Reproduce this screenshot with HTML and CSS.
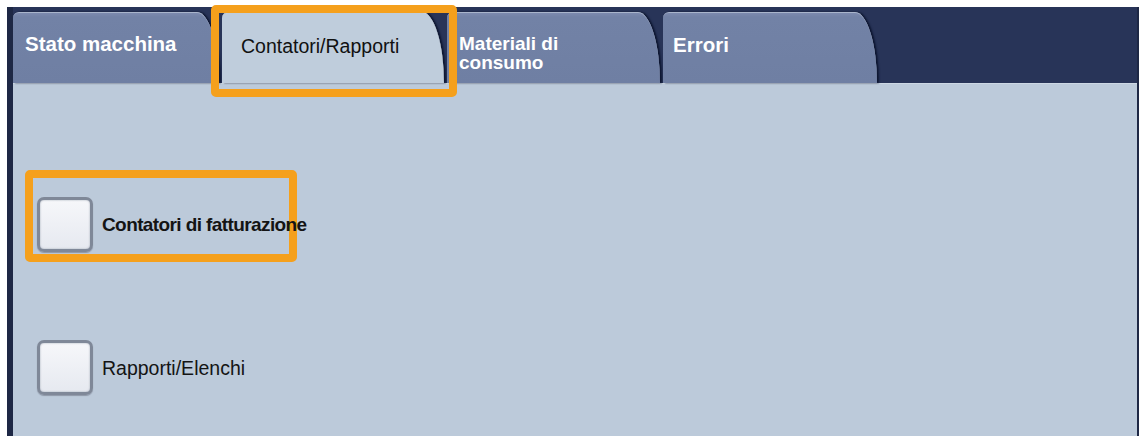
FILE: index.html
```html
<!DOCTYPE html>
<html lang="it">
<head>
<meta charset="utf-8">
<title>Contatori/Rapporti</title>
<link rel="stylesheet" href="styles.css">
</head>
<body>
<div class="frame">
  <div class="tabbar">
    <div class="tab">Stato macchina</div>
    <div class="tab active">Contatori/Rapporti</div>
    <div class="tab two-line">Materiali di<br>consumo</div>
    <div class="tab last">Errori</div>
  </div>
  <div class="panel">
    <div class="row highlighted">
      <div class="btn"></div>
      <span class="label bold">Contatori di fatturazione</span>
    </div>
    <div class="row">
      <div class="btn"></div>
      <span class="label">Rapporti/Elenchi</span>
    </div>
  </div>
</div>
</body>
</html>
```

FILE: styles.css
```css
*, *::before, *::after { box-sizing: border-box; }

html, body {
  margin: 0;
  padding: 0;
  background: #ffffff;
}

body {
  font-family: "Liberation Sans", Arial, sans-serif;
}

.frame {
  margin: 7px 4px 0 7px;
  height: 429px;
  background: #283458;
  border-left: 6px solid #1e2845;
  border-right: 2px solid #1e2845;
  display: flex;
  flex-direction: column;
}

.tabbar {
  height: 76px;
  padding-top: 5px;
  display: flex;
  align-items: stretch;
}

.tab {
  position: relative;
  height: 71px;
  margin-right: 3px;
  padding: 22px 0 0 12px;
  color: #ffffff;
  font-size: 20.5px;
  font-weight: bold;
  line-height: 20px;
  background: linear-gradient(#7c8aae 0, #7282a6 4px, #6f7fa3 100%);
  border-top: 1px solid #a9b5cc;
  border-top-left-radius: 6px;
  border-top-right-radius: 22px 100%;
  box-shadow: 2px 0 2px #0c1530;
}

.tab:nth-child(1) { width: 206px; padding-top: 21px; }
.tab:nth-child(2) { width: 222px; }
.tab:nth-child(3) { width: 213px; }
.tab:nth-child(4) { width: 214px; padding-left: 10px; }

.tab.active {
  background: #bfcddc;
  border-top-color: #d3dde8;
  color: #111111;
  font-weight: normal;
  font-size: 19.5px;
  padding-left: 19px;
  padding-top: 23px;
}

.tab.active::after {
  content: "";
  position: absolute;
  left: -11px;
  top: -8px;
  right: -13px;
  bottom: -14px;
  border: 8px solid #f5a01c;
  border-radius: 5px;
  z-index: 2;
}

.tab.two-line {
  font-size: 19px;
  line-height: 19px;
  padding-top: 21px;
}

.panel {
  flex: 1;
  background: #bccada;
  border-top: 1px solid #cdd8e4;
  padding: 113px 0 0 24px;
  display: flex;
  flex-direction: column;
  gap: 88px;
}

.row {
  position: relative;
  display: flex;
  align-items: center;
  gap: 9px;
  height: 55px;
}

.row.highlighted::after {
  content: "";
  position: absolute;
  left: -12px;
  top: -27px;
  width: 272px;
  height: 92px;
  border: 8px solid #f5a01c;
  border-radius: 5px;
}

.btn {
  width: 56px;
  height: 55px;
  flex: none;
  border: 3px solid #7f8898;
  border-radius: 7px;
  background: linear-gradient(#f6f7fa, #e6e9f0);
  box-shadow: inset 0 0 2px #9aa2b0, 0 1px 1px #8d96a6;
}

.label {
  color: #141414;
  font-size: 19.5px;
  position: relative;
  top: 1px;
  z-index: 3;
}

.label.bold {
  font-weight: bold;
  font-size: 19px;
  letter-spacing: -0.6px;
  top: 0;
}
```
